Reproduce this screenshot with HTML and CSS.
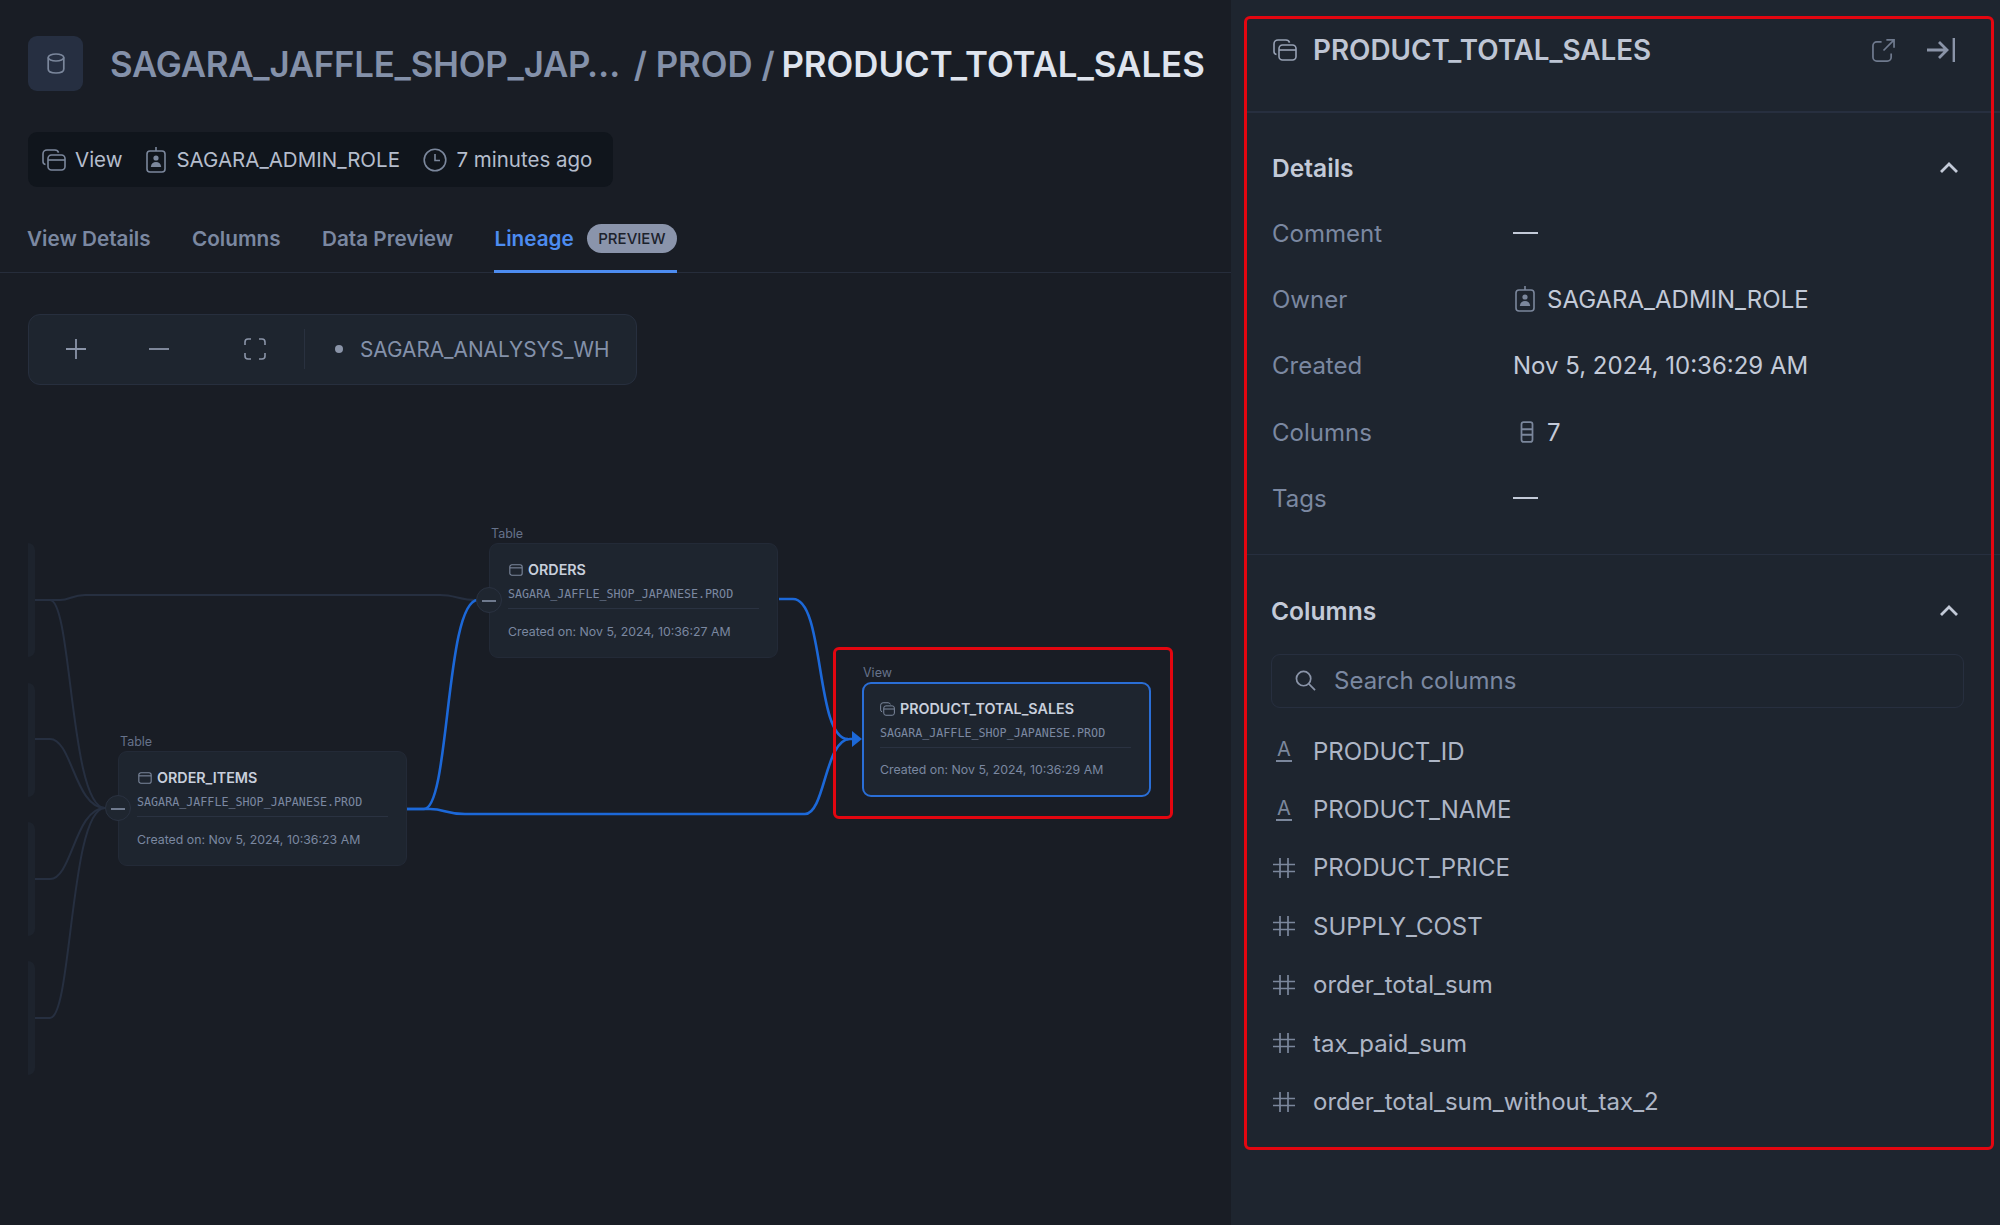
FILE: index.html
```html
<!DOCTYPE html>
<html lang="en">
<head>
<meta charset="utf-8">
<title>PRODUCT_TOTAL_SALES</title>
<link rel="stylesheet" href="styles.css">
</head>
<body>
<svg class="sprite" width="0" height="0" aria-hidden="true">
  <symbol id="i-view" viewBox="0 0 24 22">
    <path d="M3.5 15.5A3 3 0 0 1 1 12.5V5a4 4 0 0 1 4-4h8a4 4 0 0 1 3.6 2.6" fill="none" stroke="currentColor" stroke-width="1.6"/>
    <rect x="6" y="6" width="17" height="15" rx="3.5" fill="none" stroke="currentColor" stroke-width="1.6"/>
    <path d="M6 11h17" stroke="currentColor" stroke-width="1.6"/>
  </symbol>
  <symbol id="i-role" viewBox="0 0 20 26">
    <rect x="1" y="4" width="18" height="21" rx="3" fill="none" stroke="currentColor" stroke-width="1.6"/>
    <path d="M10 0v4" stroke="currentColor" stroke-width="1.6"/>
    <circle cx="10" cy="11" r="2.6" fill="currentColor"/>
    <path d="M4.8 20c.3-3.4 2.4-5 5.2-5s4.900 1.600 5.200 5z" fill="currentColor"/>
  </symbol>
  <symbol id="i-table" viewBox="0 0 16 14">
    <rect x=".8" y=".8" width="14.400" height="12.400" rx="2.500" fill="none" stroke="currentColor" stroke-width="1.300"/>
    <path d="M.8 4.500h14.400" stroke="currentColor" stroke-width="1.300"/>
  </symbol>
  <symbol id="i-hash" viewBox="0 0 22 22">
    <path d="M7 1v20M15 1v20M0 7.500h22M0 14.500h22" stroke="currentColor" stroke-width="1.700" fill="none"/>
  </symbol>
  <symbol id="i-chevron" viewBox="0 0 20 12">
    <path d="M2 10l8-8 8 8" fill="none" stroke="currentColor" stroke-width="2.800"/>
  </symbol>
</svg>

<div class="app">
  <main class="main">
    <header class="crumbs">
      <span class="crumb-icon">
        <svg class="icon-db" viewBox="0 0 18 21"><ellipse cx="9" cy="4.500" rx="7.800" ry="3.500" fill="none" stroke="currentColor" stroke-width="1.700"/><path d="M1.200 4.500v11.500c0 2.500 3.500 4 7.800 4s7.800-1.500 7.800-4V4.500" fill="none" stroke="currentColor" stroke-width="1.700"/></svg>
      </span>
      <h1 class="crumb-text"><span class="crumb-db">SAGARA_JAFFLE_SHOP_JAP…</span> / PROD / <span class="crumb-current">PRODUCT_TOTAL_SALES</span></h1>
    </header>

    <div class="meta">
      <svg class="icon-view-m"><use href="#i-view"/></svg><span class="meta-view">View</span>
      <svg class="icon-role-m"><use href="#i-role"/></svg><span class="meta-role">SAGARA_ADMIN_ROLE</span>
      <svg class="icon-clock" viewBox="0 0 24 24"><circle cx="12" cy="12" r="10.800" fill="none" stroke="currentColor" stroke-width="1.600"/><path d="M12 6v6.500h5" fill="none" stroke="currentColor" stroke-width="1.600"/></svg><span>7 minutes ago</span>
    </div>

    <nav class="tabs">
      <a class="tab">View Details</a>
      <a class="tab">Columns</a>
      <a class="tab">Data Preview</a>
      <a class="tab tab-active">Lineage <span class="badge">PREVIEW</span></a>
    </nav>

    <div class="toolbar">
      <svg class="tool-plus" viewBox="0 0 20 20"><path d="M10 0v20M0 10h20" stroke="currentColor" stroke-width="1.800"/></svg>
      <svg class="tool-minus" viewBox="0 0 20 20"><path d="M0 10h20" stroke="currentColor" stroke-width="1.800"/></svg>
      <svg class="tool-fit" viewBox="0 0 22 22"><path d="M1 7V4a3 3 0 0 1 3-3h3M15 1h3a3 3 0 0 1 3 3v3M21 15v3a3 3 0 0 1-3 3h-3M7 21H4a3 3 0 0 1-3-3v-3" fill="none" stroke="currentColor" stroke-width="1.600"/></svg>
      <span class="tool-div"></span>
      <span class="tool-dot"></span>
      <span class="tool-wh">SAGARA_ANALYSYS_WH</span>
    </div>

    <section class="graph">
      <svg class="edges" viewBox="0 385 1231 840">
        <g class="edge-muted">
          <path d="M35 600H60C70 600 72 595 85 595H440C455 595 460 600 476 600"/>
          <path d="M35 600H50C72 600 70 808 105 808"/>
          <path d="M35 739H50C72 739 75 808 105 808"/>
          <path d="M35 879H50C72 879 75 808 105 808"/>
          <path d="M35 1018H50C72 1018 70 808 105 808"/>
        </g>
        <g class="edge-active">
          <path d="M407 809H424C450 809 445 600 478 600"/>
          <path d="M407 809H430C445 809 445 814 465 814H805C825 814 825 739 850 739H856"/>
          <path d="M779 599H793C825 599 815 739 848 739"/>
        </g>
        <polygon class="edge-head" points="852,731 862,739 852,747"/>
      </svg>

      <div class="stub stub-a"></div>
      <div class="stub stub-b"></div>
      <div class="stub stub-c"></div>
      <div class="stub stub-d"></div>

      <article class="node node-orders">
        <span class="node-type">Table</span>
        <h3 class="node-title"><svg class="node-icon"><use href="#i-table"/></svg>ORDERS</h3>
        <p class="node-path">SAGARA_JAFFLE_SHOP_JAPANESE.PROD</p>
        <p class="node-date">Created on: Nov 5, 2024, 10:36:27 AM</p>
        <span class="handle"></span>
      </article>

      <article class="node node-items">
        <span class="node-type">Table</span>
        <h3 class="node-title"><svg class="node-icon"><use href="#i-table"/></svg>ORDER_ITEMS</h3>
        <p class="node-path">SAGARA_JAFFLE_SHOP_JAPANESE.PROD</p>
        <p class="node-date">Created on: Nov 5, 2024, 10:36:23 AM</p>
        <span class="handle"></span>
      </article>

      <article class="node node-view">
        <span class="node-type">View</span>
        <h3 class="node-title"><svg class="node-icon node-icon-view"><use href="#i-view"/></svg>PRODUCT_TOTAL_SALES</h3>
        <p class="node-path">SAGARA_JAFFLE_SHOP_JAPANESE.PROD</p>
        <p class="node-date">Created on: Nov 5, 2024, 10:36:29 AM</p>
      </article>
    </section>
  </main>

  <aside class="panel">
    <header class="panel-head">
      <svg class="panel-icon"><use href="#i-view"/></svg>
      <h2 class="panel-title">PRODUCT_TOTAL_SALES</h2>
      <svg class="head-open" viewBox="0 0 24 24"><path d="M10 3H5a4 4 0 0 0-4 4v12a4 4 0 0 0 4 4h11a4 4 0 0 0 4-4v-4" fill="none" stroke="currentColor" stroke-width="1.800"/><path d="M12 12L23 1M15 1h8v8" fill="none" stroke="currentColor" stroke-width="1.800"/></svg>
      <svg class="head-close" viewBox="0 0 28 24"><path d="M0 12h20M12 4l8 8-8 8" fill="none" stroke="currentColor" stroke-width="2.800"/><path d="M27 0v24" stroke="currentColor" stroke-width="2.800"/></svg>
    </header>

    <section class="details">
      <div class="section-head"><h3>Details</h3><svg class="chevron"><use href="#i-chevron"/></svg></div>
      <dl class="rows">
        <div class="row"><dt>Comment</dt><dd><span class="dash"></span></dd></div>
        <div class="row"><dt>Owner</dt><dd><svg class="icon-role-p"><use href="#i-role"/></svg>SAGARA_ADMIN_ROLE</dd></div>
        <div class="row"><dt>Created</dt><dd>Nov 5, 2024, 10:36:29 AM</dd></div>
        <div class="row"><dt>Columns</dt><dd><svg class="icon-cols" viewBox="0 0 12 20"><rect x="1" y="1" width="10" height="18" rx="2" fill="none" stroke="currentColor" stroke-width="1.600"/><path d="M1 7.500h10M1 12.500h10" stroke="currentColor" stroke-width="1.600"/></svg>7</dd></div>
        <div class="row"><dt>Tags</dt><dd><span class="dash"></span></dd></div>
      </dl>
    </section>

    <section class="columns">
      <div class="section-head"><h3>Columns</h3><svg class="chevron"><use href="#i-chevron"/></svg></div>
      <div class="search">
        <svg class="search-icon" viewBox="0 0 22 22"><circle cx="9" cy="9" r="7.500" fill="none" stroke="currentColor" stroke-width="1.800"/><path d="M14.500 14.500L21 21" stroke="currentColor" stroke-width="1.800"/></svg>
        <span>Search columns</span>
      </div>
      <ul class="col-list">
        <li><span class="type-a"><span>A</span></span>PRODUCT_ID</li>
        <li><span class="type-a"><span>A</span></span>PRODUCT_NAME</li>
        <li><svg class="type-hash"><use href="#i-hash"/></svg>PRODUCT_PRICE</li>
        <li><svg class="type-hash"><use href="#i-hash"/></svg>SUPPLY_COST</li>
        <li><svg class="type-hash"><use href="#i-hash"/></svg>order_total_sum</li>
        <li><svg class="type-hash"><use href="#i-hash"/></svg>tax_paid_sum</li>
        <li><svg class="type-hash"><use href="#i-hash"/></svg>order_total_sum_without_tax_2</li>
      </ul>
    </section>
  </aside>

  <div class="mark mark-node"></div>
  <div class="mark mark-panel"></div>
</div>
</body>
</html>
```

FILE: styles.css
```css
* { box-sizing: border-box; }

html, body {
  margin: 0;
  height: 100%;
  background: #191d25;
  font-family: Inter, "Liberation Sans", sans-serif;
  color: #c3cad8;
}

h1, h2, h3, p, dl, dd, dt, ul { margin: 0; padding: 0; }

.sprite { position: absolute; }

.app {
  position: relative;
  display: grid;
  grid-template-columns: 1231px 769px;
  height: 1225px;
  overflow: hidden;
}

/* Left column */
.main {
  display: flex;
  flex-direction: column;
  min-width: 0;
  padding-top: 36px;
}

.crumbs {
  display: flex;
  align-items: center;
  gap: 27px;
  height: 55px;
  margin-left: 28px;
}

.crumb-icon {
  display: flex;
  align-items: center;
  justify-content: center;
  width: 55px;
  height: 55px;
  border-radius: 9px;
  background: #262f41;
  color: #7b879c;
}

.icon-db { width: 18px; height: 21px; }

.crumb-text {
  font-size: 34.800px;
  font-weight: 600;
  color: #8491aa;
  white-space: nowrap;
}

.crumb-db { margin-right: 5px; letter-spacing: -0.220px; }
.crumb-current { margin-left: -2px; color: #dfe4ee; }

.meta {
  display: flex;
  align-items: center;
  align-self: flex-start;
  height: 55px;
  margin: 41px 0 0 28px;
  padding: 0 21px 0 14px;
  border-radius: 9px;
  background: #10151c;
  font-size: 20.500px;
  color: #b5bdcc;
}

.meta svg { color: #7b879c; flex: none; }
.icon-view-m { width: 24px; height: 22px; margin-right: 9px; }
.meta-view { margin-right: 24px; }
.icon-role-m { width: 20px; height: 26px; margin-right: 10px; }
.meta-role { margin-right: 23px; }
.icon-clock { width: 24px; height: 24px; margin-right: 9.500px; }

.tabs {
  display: flex;
  gap: 41.400px;
  height: 86px;
  padding-left: 27px;
  border-bottom: 1px solid #262d3b;
}

.tab {
  position: relative;
  display: flex;
  align-items: center;
  gap: 13px;
  height: 86px;
  padding-top: 17px;
  font-size: 20.700px;
  font-weight: 600;
  color: #7b88a1;
}

.tab-active { color: #4d8cf0; }

.tab-active::after {
  content: "";
  position: absolute;
  left: 0;
  right: 0;
  bottom: 0;
  height: 3px;
  background: #4d8cf0;
}

.badge {
  display: flex;
  align-items: center;
  height: 29px;
  padding: 0 11.500px;
  border-radius: 15px;
  background: #8a94ab;
  color: #1c222c;
  font-size: 15px;
  font-weight: 500;
}

.toolbar {
  display: flex;
  align-items: center;
  align-self: flex-start;
  flex: none;
  width: 609px;
  height: 71px;
  margin: 41px 0 0 28px;
  padding-bottom: 1px;
  border: 1px solid #272f3e;
  border-radius: 12px;
  background: #1e252f;
  color: #8a94a8;
}

.tool-plus { width: 20px; height: 20px; margin-left: 37px; }
.tool-minus { width: 20px; height: 20px; margin-left: 63px; }
.tool-fit { width: 22px; height: 22px; margin-left: 75px; }
.tool-div { width: 1px; height: 40px; margin-left: 38px; background: #29313f; }
.tool-dot { width: 8px; height: 8px; margin-left: 30px; border-radius: 50%; background: #8a94a8; }
.tool-wh { margin-left: 17px; font-size: 20.800px; color: #8491aa; }

/* Lineage canvas: nodes are placed freely on it */
.graph {
  position: relative;
  flex: 1;
  overflow: hidden;
}

.edges {
  position: absolute;
  left: 0;
  top: 0;
  width: 1231px;
  height: 840px;
}

.edges path { fill: none; stroke-width: 2; }
.edge-muted path { stroke: #262f40; }
.edge-active path { stroke: #1c68d8; stroke-width: 2.600; }
.edge-head { fill: #1c68d8; }

.stub {
  position: absolute;
  left: 28px;
  width: 7px;
  height: 114px;
  border-radius: 0 7px 7px 0;
  background: #1d232d;
}
.stub-a { top: 158px; }
.stub-b { top: 298px; }
.stub-c { top: 437px; }
.stub-d { top: 576px; }

.node {
  position: absolute;
  width: 289px;
  height: 115px;
  border: 1px solid #232a37;
  border-radius: 9px;
  background: #1e252f;
}

.node-orders { left: 489px; top: 158px; }
.node-items { left: 118px; top: 366px; }
.node-view { left: 862px; top: 297px; border: 2px solid #2a6ed6; }

.node-type {
  position: absolute;
  left: 1px;
  top: -18px;
  font-size: 12.500px;
  line-height: 16px;
  color: #66728a;
}

.node-title {
  position: absolute;
  left: 19px;
  top: 16px;
  display: flex;
  align-items: center;
  gap: 5px;
  font-size: 14.300px;
  line-height: 20px;
  font-weight: 600;
  color: #c8cfdc;
}

.node-icon { width: 14px; height: 12px; color: #7b879c; }
.node-icon-view { width: 15px; height: 14px; }

.node-path {
  position: absolute;
  left: 18px;
  right: 18px;
  top: 40px;
  height: 25px;
  border-bottom: 1px solid #2a3241;
  font-family: "DejaVu Sans Mono", monospace;
  font-size: 11.700px;
  line-height: 20px;
  color: #7b88a1;
  white-space: nowrap;
}

.node-date {
  position: absolute;
  left: 18px;
  top: 78px;
  font-size: 12.350px;
  line-height: 20px;
  color: #7b88a1;
  white-space: nowrap;
}

/* The selected node's thicker border shifts its content box */
.node-view .node-type { left: -1px; top: -19px; }
.node-view .node-title { left: 16px; top: 15px; }
.node-view .node-path { left: 16px; top: 39px; }
.node-view .node-date { left: 16px; top: 76px; }

.handle {
  position: absolute;
  left: -14px;
  top: 43px;
  width: 26px;
  height: 26px;
  border: 1px solid #2a3241;
  border-radius: 50%;
  background: #1f2630;
}

.handle::after {
  content: "";
  position: absolute;
  left: 5px;
  right: 5px;
  top: 12px;
  height: 2px;
  background: #6f7a8e;
}

/* Side panel */
.panel {
  display: flex;
  flex-direction: column;
  background: #1e252f;
}

.panel-head {
  display: flex;
  align-items: center;
  height: 113px;
  margin-left: 15px;
  padding: 0 45px 11px 27px;
  border-bottom: 2px solid #272f3f;
}

.panel-icon { width: 24px; height: 22px; margin-right: 16px; color: #97a1b4; flex: none; }

.panel-title {
  flex: 1;
  font-size: 27.800px;
  font-weight: 600;
  color: #bec5d4;
}

.head-open { width: 23px; height: 23px; color: #6f7a8e; margin-right: 32px; }
.head-close { width: 28px; height: 24px; color: #8a94a8; }

.details {
  height: 442px;
  margin-left: 15px;
  padding: 39px 36px 0 26px;
  border-bottom: 1px solid #272f3f;
}

.section-head {
  display: flex;
  align-items: center;
  justify-content: space-between;
  height: 32px;
  padding-right: 5px;
}

.section-head h3 {
  font-size: 24.600px;
  font-weight: 600;
  color: #c3cad8;
}

.chevron { width: 20px; height: 12px; color: #c3cad8; }

.rows { margin-top: 16px; }

.row {
  display: flex;
  align-items: center;
  height: 66.300px;
  font-size: 24px;
}

.row dt { width: 241px; color: #7b88a1; }

.row dd {
  display: flex;
  align-items: center;
  color: #c3cad8;
}

.dash { display: block; width: 25px; height: 2px; background: #c3cad8; }

.icon-role-p { width: 22px; height: 26px; margin: 0 11px 0 1px; color: #7b879c; }
.icon-cols { width: 14px; height: 22px; margin: 0 13px 0 7px; color: #7b879c; }

.columns { padding: 40px 36px 0 40px; }

.search {
  display: flex;
  align-items: center;
  height: 54px;
  margin-top: 27px;
  padding: 0 0 2px 23px;
  border: 1px solid #272f3f;
  border-radius: 9px;
  font-size: 24px;
  color: #7b88a1;
}

.search-icon { width: 21px; height: 21px; margin-right: 18px; color: #8a94a8; }

.col-list {
  list-style: none;
  margin-top: 14px;
}

.col-list li {
  display: flex;
  align-items: center;
  height: 58.400px;
  font-size: 24px;
  color: #aeb6c6;
}

.type-hash { width: 22px; height: 22px; margin: 0 18px 0 2px; color: #7b879c; flex: none; }

.type-a {
  display: flex;
  justify-content: center;
  width: 22px;
  margin: 0 18px 0 2px;
  flex: none;
  font-size: 20px;
  line-height: 19px;
  color: #7b879c;
}

.type-a span { border-bottom: 2px solid #7b879c; padding: 0 1px 1px; }

/* Review outlines drawn on top of the page */
.mark {
  position: absolute;
  border: 3px solid #e30610;
  border-radius: 6px;
  pointer-events: none;
}
.mark-node { left: 833px; top: 647px; width: 340px; height: 172px; }
.mark-panel { left: 1244px; top: 16px; width: 750px; height: 1134px; }
```
